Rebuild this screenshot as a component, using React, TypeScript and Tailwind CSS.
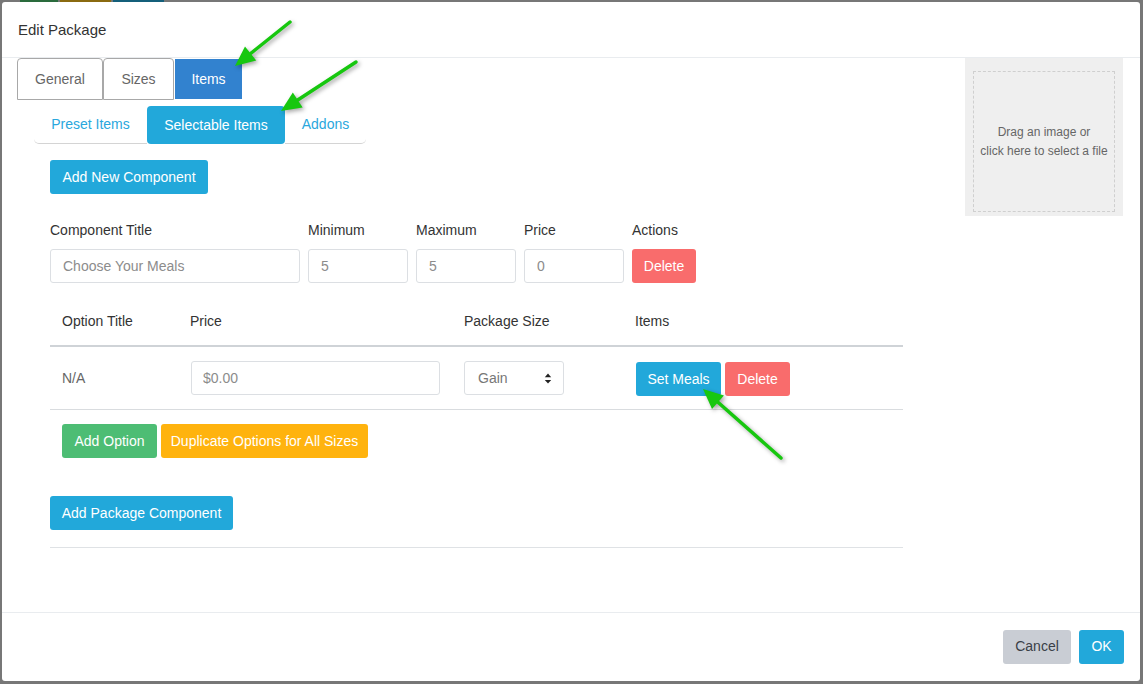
import React from 'react';

const font = { fontFamily: '"Liberation Sans", Arial, sans-serif' };

function Arrow({ x1, y1, x2, y2 }: { x1: number; y1: number; x2: number; y2: number }) {
  const dx = x2 - x1;
  const dy = y2 - y1;
  const len = Math.hypot(dx, dy);
  const ux = dx / len;
  const uy = dy / len;
  const hl = 20;
  const hw = 9;
  const bx = x2 - ux * hl;
  const by = y2 - uy * hl;
  const head = `${x2},${y2} ${bx - uy * hw},${by + ux * hw} ${bx + uy * hw},${by - ux * hw}`;
  return (
    <g>
      <line x1={x1} y1={y1} x2={bx} y2={by} stroke="#17c70f" strokeWidth="3.5" strokeLinecap="round" />
      <polygon points={head} fill="#17c70f" />
    </g>
  );
}

function Btn({ children, className }: { children: React.ReactNode; className: string }) {
  return (
    <button className={`h-[34px] whitespace-nowrap rounded-[3px] px-0 text-[14px] text-white ${className}`}>
      {children}
    </button>
  );
}

export default function App() {
  return (
    <div style={font} className="relative flex h-[684px] w-[1143px] flex-col bg-[#777777]">
      <div className="flex h-[2px] shrink-0">
        <div className="w-[20px]" />
        <div className="w-[38px] bg-[#2a6b3c]" />
        <div className="w-[2px]" />
        <div className="w-[51px] bg-[#8a6a10]" />
        <div className="w-[2px]" />
        <div className="w-[51px] bg-[#145f7a]" />
      </div>
      <div className="flex min-h-0 flex-1 pb-[3px] pl-[2px] pr-[3px]">
        <div className="flex flex-1 flex-col rounded-[3px] bg-white">
          {/* header */}
          <div className="flex h-[56px] shrink-0 items-center border-b border-[#e9ecef] pl-[16px] pt-[2px] text-[15px] text-[#333]">
            Edit Package
          </div>

          {/* body */}
          <div className="flex min-h-0 flex-1 pl-[15px] pr-[17px]">
            <div className="flex-1">
              {/* tabs */}
              <div className="flex h-[42px] items-stretch text-[14px]">
                <div className="flex w-[86px] items-center justify-center rounded-t-[4px] border border-[#a8a8a8] text-[#666]">
                  General
                </div>
                <div className="flex w-[71px] items-center justify-center rounded-t-[4px] border border-[#a8a8a8] text-[#666]">
                  Sizes
                </div>
                <div className="my-[1px] ml-[1px] flex w-[67px] items-center justify-center bg-[#3282cf] text-white">
                  Items
                </div>
              </div>

              {/* sub tabs */}
              <div className="ml-[17px] mt-[6px] flex h-[38px] text-[14px]">
                <div className="flex w-[113px] items-center justify-center rounded-bl-[5px] border-b border-[#d4d4d4] text-[#2aa7dd]">
                  Preset Items
                </div>
                <div className="flex w-[138px] items-center justify-center rounded-[4px] bg-[#22a8da] text-white">
                  Selectable Items
                </div>
                <div className="flex w-[81px] items-center justify-center rounded-br-[5px] border-b border-[#d4d4d4] text-[#2aa7dd]">
                  Addons
                </div>
              </div>

              <div className="ml-[33px] w-[853px]">
                <div className="mt-[16px]">
                  <Btn className="w-[158px] bg-[#22a8da]">Add New Component</Btn>
                </div>

                {/* component fields */}
                <div className="mt-[26px] flex gap-[8px] text-[14px] text-[#333]">
                  <div className="flex w-[250px] flex-col gap-[9px]">
                    <div className="leading-[20px]">Component Title</div>
                    <input
                      placeholder="Choose Your Meals"
                      className="h-[34px] rounded-[3px] border border-[#dcdfe3] px-[12px] text-[14px] placeholder:text-[#8c8c8c]"
                    />
                  </div>
                  <div className="flex w-[100px] flex-col gap-[9px]">
                    <div className="leading-[20px]">Minimum</div>
                    <input defaultValue="5" className="h-[34px] rounded-[3px] border border-[#dcdfe3] px-[12px] text-[#8c8c8c]" />
                  </div>
                  <div className="flex w-[100px] flex-col gap-[9px]">
                    <div className="leading-[20px]">Maximum</div>
                    <input defaultValue="5" className="h-[34px] rounded-[3px] border border-[#dcdfe3] px-[12px] text-[#8c8c8c]" />
                  </div>
                  <div className="flex w-[100px] flex-col gap-[9px]">
                    <div className="leading-[20px]">Price</div>
                    <input defaultValue="0" className="h-[34px] rounded-[3px] border border-[#dcdfe3] px-[12px] text-[#8c8c8c]" />
                  </div>
                  <div className="flex flex-col gap-[9px]">
                    <div className="leading-[20px]">Actions</div>
                    <Btn className="w-[64px] bg-[#f96c6c]">Delete</Btn>
                  </div>
                </div>

                {/* options table */}
                <div className="mt-[15px] text-[14px] text-[#333]">
                  <div className="flex h-[49px] items-center border-b-2 border-[#cfd3d7]">
                    <div className="w-[140px] pl-[12px]">Option Title</div>
                    <div className="w-[274px]">Price</div>
                    <div className="w-[171px]">Package Size</div>
                    <div>Items</div>
                  </div>
                  <div className="flex h-[63px] items-center border-b border-[#d9dcdf]">
                    <div className="w-[141px] pl-[12px] text-[#666]">N/A</div>
                    <div className="w-[273px]">
                      <input
                        placeholder="$0.00"
                        className="h-[34px] w-[249px] rounded-[3px] border border-[#dcdfe3] px-[11px] text-[14px] placeholder:text-[#8c8c8c]"
                      />
                    </div>
                    <div className="w-[172px]">
                      <div className="flex h-[34px] w-[100px] items-center justify-between rounded-[3px] border border-[#dcdfe3] pl-[13px] pr-[11px] text-[#777]">
                        <span>Gain</span>
                        <svg viewBox="0 0 8 12" className="h-[11px] w-[8px]">
                          <path d="M4 0.5 L7.5 4.5 H0.5 Z" fill="#222" />
                          <path d="M4 11.5 L7.5 7.5 H0.5 Z" fill="#222" />
                        </svg>
                      </div>
                    </div>
                    <div className="flex gap-[4px] pt-[2px]">
                      <Btn className="w-[85px] bg-[#22a8da]">Set Meals</Btn>
                      <Btn className="w-[65px] bg-[#f96c6c]">Delete</Btn>
                    </div>
                  </div>
                </div>

                <div className="mt-[14px] flex gap-[4px] pl-[12px]">
                  <Btn className="w-[95px] bg-[#4dbd74]">Add Option</Btn>
                  <Btn className="w-[207px] bg-[#ffb30e]">Duplicate Options for All Sizes</Btn>
                </div>

                <div className="mt-[38px]">
                  <Btn className="w-[183px] bg-[#22a8da]">Add Package Component</Btn>
                </div>

                <div className="mt-[17px] border-b border-[#dfe2e5]" />
              </div>
            </div>

            {/* image drop */}
            <div className="w-[158px] shrink-0">
              <div className="h-[158px] bg-[#efefef] px-[8px] pb-[4px] pt-[13px]">
                <div className="flex h-full items-center justify-center border border-dashed border-[#cfcfcf] text-center text-[12px] leading-[19px] text-[#666]">
                  <div>
                    Drag an image or
                    <br />
                    click here to select a file
                  </div>
                </div>
              </div>
            </div>
          </div>

          {/* footer */}
          <div className="flex h-[69px] shrink-0 items-center justify-end gap-[8px] border-t border-[#e9ecef] pb-[1px] pr-[16px]">
            <button className="h-[34px] w-[68px] rounded-[3px] bg-[#c9cdd4] text-[14px] text-[#3a3f47]">Cancel</button>
            <button className="h-[34px] w-[45px] rounded-[3px] bg-[#22a8da] text-[14px] text-white">OK</button>
          </div>
        </div>
      </div>

      {/* annotation arrows */}
      <svg
        className="pointer-events-none absolute left-0 top-0 h-[684px] w-[1143px]"
        style={{ filter: 'drop-shadow(2px 2px 2px rgba(0,0,0,0.35))' }}
      >
        <Arrow x1={290} y1={22} x2={235} y2={66} />
        <Arrow x1={356} y1={62} x2={281} y2={111} />
        <Arrow x1={781} y1={458} x2={703} y2={389} />
      </svg>
    </div>
  );
}
